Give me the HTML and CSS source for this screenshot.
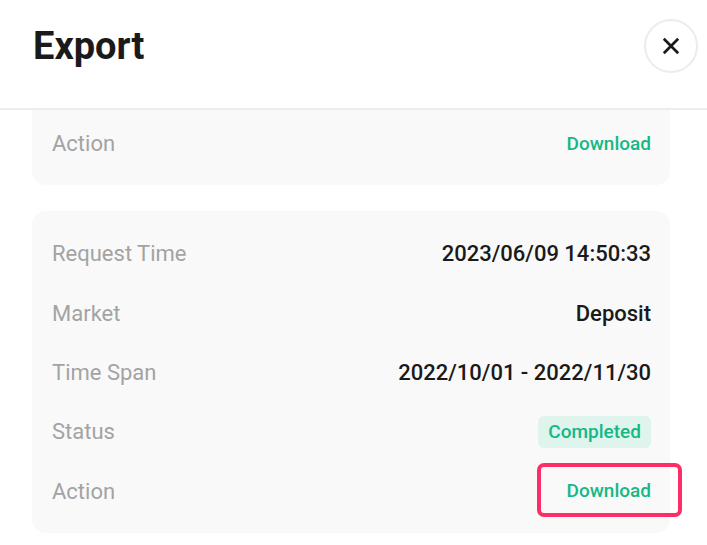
FILE: index.html
```html
<!DOCTYPE html>
<html lang="en">
<head>
    <meta charset="UTF-8">
    <meta name="viewport" content="width=device-width, initial-scale=1.0">
    <title>Export</title>
    <link rel="stylesheet" href="styles.css">
</head>
<body>
    <div class="header">
        <h2 class="title">Export</h2>
        <button class="close-btn" type="button" aria-label="Close">
            <svg width="20" height="20" viewBox="0 0 20 20">
                <path d="M2 2 L18 18 M18 2 L2 18" stroke="#1a1a1a" stroke-width="3" fill="none"/>
            </svg>
        </button>
    </div>
    <div class="scroll-area">
        <div class="export-list">
            <!-- previous record, scrolled under the header -->
            <div class="export-card cut">
                <div class="row"><span class="label">Action</span><a class="download" href="#">Download</a></div>
            </div>
            <div class="export-card">
                <div class="row"><span class="label">Request Time</span><span class="value">2023/06/09 14:50:33</span></div>
                <div class="row"><span class="label">Market</span><span class="value">Deposit</span></div>
                <div class="row"><span class="label">Time Span</span><span class="value">2022/10/01 - 2022/11/30</span></div>
                <div class="row"><span class="label">Status</span><span class="badge">Completed</span></div>
                <div class="row"><span class="label">Action</span><a class="download highlight" href="#">Download</a></div>
            </div>
        </div>
    </div>
</body>
</html>
```

FILE: styles.css
```css
body {
  margin: 0;
  background: #fff;
  font-family: Roboto, "Liberation Sans", sans-serif;
  overflow: hidden;
}
.header {
  height: 110px;
  box-sizing: border-box;
  display: flex;
  align-items: center;
  justify-content: space-between;
  padding: 0 9px 16px 33px;
  border-bottom: 2px solid #ededed;
}
.title {
  margin: 0;
  font-size: 38px;
  line-height: 38px;
  font-weight: 700;
  color: #1a1a1a;
}
.close-btn {
  width: 54px;
  height: 54px;
  border-radius: 50%;
  border: 2px solid #ececec;
  background: #fff;
  display: flex;
  align-items: center;
  justify-content: center;
  padding: 0;
  cursor: pointer;
}
.close-btn svg {
  width: 18px;
  height: 18px;
}
.scroll-area {
  height: 435px;
  overflow: hidden;
  padding: 0 37px 0 32px;
}
.export-list {
  display: flex;
  flex-direction: column;
  gap: 26px;
}
.export-card {
  background: #f9f9f9;
  border-radius: 14px;
  padding: 13px 19px 12px 20px;
}
.export-card.cut {
  border-radius: 0 0 14px 14px;
  padding-top: 4px;
}
.row {
  height: 59.3px;
  display: flex;
  align-items: center;
  justify-content: space-between;
}
.label {
  font-size: 22px;
  color: #a3a3a3;
}
.value {
  font-size: 22px;
  font-weight: 500;
  color: #1a1a1a;
}
.badge {
  height: 32px;
  line-height: 32px;
  padding: 0 10px;
  border-radius: 6px;
  background: #dff4ed;
  color: #14b886;
  font-size: 19px;
  font-weight: 500;
}
.download {
  position: relative;
  font-size: 19px;
  line-height: 24px;
  font-weight: 500;
  color: #14b886;
  text-decoration: none;
}
.highlight::after {
  content: "";
  position: absolute;
  top: -16px;
  bottom: -14px;
  left: -30px;
  right: -31px;
  border: 4px solid #fd2d68;
  border-radius: 7px;
}
```
